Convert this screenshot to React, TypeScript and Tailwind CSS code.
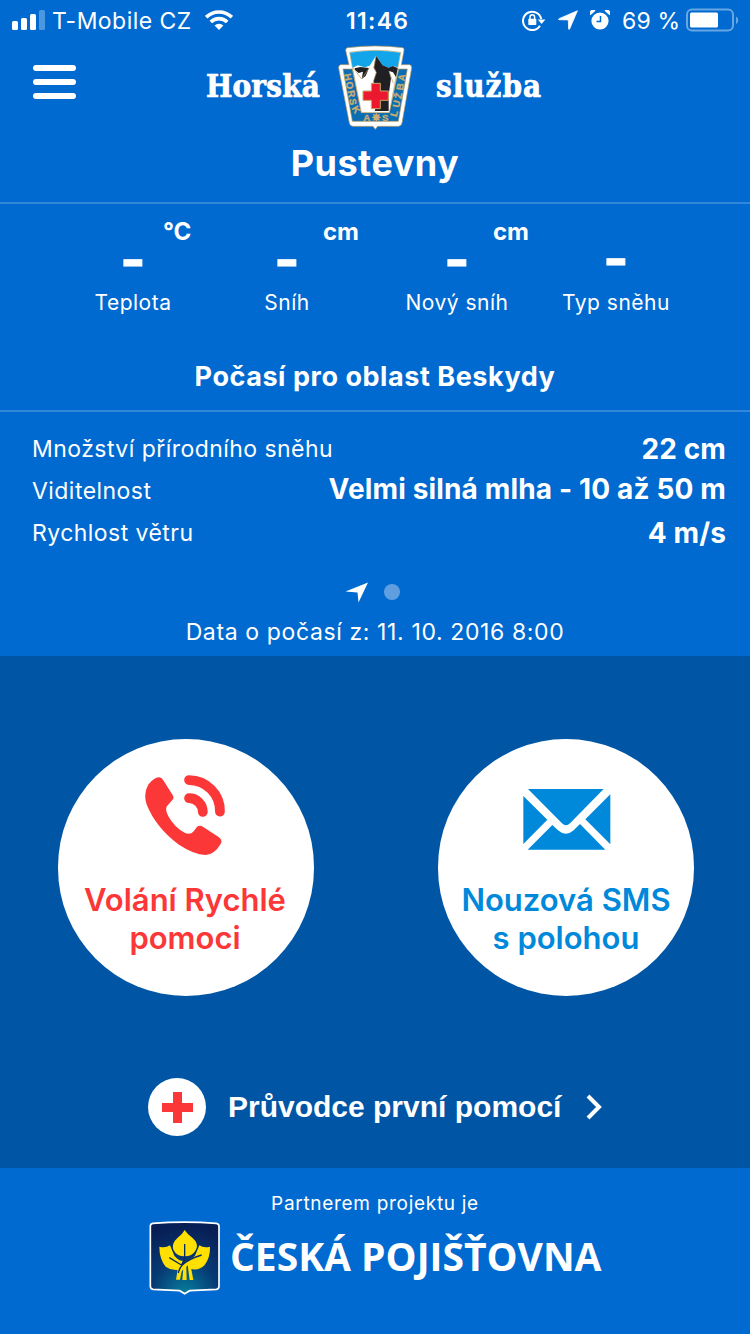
import React from 'react';

const weather = [
  { label: 'Teplota', unit: '°C', box: 'w-[154px]', unitPos: 'left-[107px]', offset: 'mt-[29px] mb-0' },
  { label: 'Sníh', unit: 'cm', box: 'w-[154px]', unitPos: 'left-[113px]', offset: 'mt-[29px] mb-0' },
  { label: 'Nový sníh', unit: 'cm', box: 'w-[186px]', unitPos: 'left-[129px]', offset: 'mt-[29px] mb-0' },
  { label: 'Typ sněhu', unit: '', box: 'w-[132px]', unitPos: 'left-[100px]', offset: 'mt-[28px] mb-px' },
];

const details = [
  { label: 'Množství přírodního sněhu', value: '22 cm', valueCls: 'tracking-[0.1px]' },
  { label: 'Viditelnost', value: 'Velmi silná mlha - 10 až 50 m', valueCls: 'tracking-[0.15px] -mt-1' },
  { label: 'Rychlost větru', value: '4 m/s', valueCls: 'tracking-[0.1px]' },
];

function StatusBar() {
  return (
    <div className="flex h-10 items-center text-[23px] leading-10">
      <svg className="ml-3 h-[20px] w-[33px] shrink-0" viewBox="0 0 33 20" fill="white">
        <rect x="0" y="11" width="6" height="9" rx="1.5" />
        <rect x="9" y="8" width="6" height="12" rx="1.5" />
        <rect x="18" y="4" width="6" height="16" rx="1.5" />
        <rect x="27" y="0" width="6" height="20" rx="1.5" opacity=".3" />
      </svg>
      <span className="mt-[2px] ml-[7px] w-[147px] whitespace-nowrap tracking-[0.45px]">T-Mobile CZ</span>
      <svg className="ml-[6px] h-[20px] w-[28px] shrink-0" viewBox="0 0 28 20" fill="none" stroke="white" strokeWidth="3.6">
        <path d="M1.2 7.2a18.2 18.2 0 0 1 25.6 0" />
        <path d="M5.8 12a11.7 11.7 0 0 1 16.4 0" />
        <path d="M14 20l-4.4-4.5a6.3 6.3 0 0 1 8.8 0z" fill="white" stroke="none" />
      </svg>
      <span className="mt-[2px] ml-[113px] w-[65px] whitespace-nowrap font-semibold tracking-[1.3px]">11:46</span>
      <svg className="ml-[111px] h-[22px] w-[24px] shrink-0" viewBox="0 0 24 22" fill="none" stroke="white" strokeWidth="2">
        <path d="M18 16.8A9.2 9.2 0 1 1 19.2 10" />
        <path d="M15.8 10.5h7.6L19.6 15z" fill="white" stroke="none" />
        <rect x="6.3" y="9.8" width="8" height="6.2" rx=".8" fill="white" stroke="none" />
        <path d="M8 10V8a2.3 2.3 0 0 1 4.600 0v2" strokeWidth="1.5" />
      </svg>
      <svg className="ml-[12px] h-[20px] w-[20px] shrink-0" viewBox="0 0 20 20" fill="white" stroke="white" strokeWidth=".8">
        <path d="M19.4.8L11.6 19c-.3.6-1 .5-1-.2L10.300 9.900 1.200 9.700c-.7 0-.8-.7-.2-1z" />
      </svg>
      <svg className="ml-[12px] h-[20px] w-[20px] shrink-0" viewBox="0 0 20 20" fill="white">
        <circle cx="10" cy="11" r="8.600" />
        <path d="M.5 5.200A3 3 0 0 1 5.500.8zM19.500 5.200A3 3 0 0 0 14.500.8z" />
        <path d="M10.500 6v5.500H6.500" fill="none" stroke="#006ad0" strokeWidth="1.500" />
      </svg>
      <span className="mt-[2px] ml-[12px] w-[58px] whitespace-nowrap tracking-[0.2px]">69 %</span>
      <svg className="ml-[6px] h-[24px] w-[54px] shrink-0" viewBox="0 0 54 24" fill="none">
        <rect x="1" y="1.500" width="46" height="21" rx="5" stroke="#66a6e3" strokeWidth="2" />
        <rect x="4" y="4.500" width="28" height="15" rx="1.500" fill="white" />
        <path d="M50 8.500c3 1.300 3 6 0 7.500z" fill="#66a6e3" />
      </svg>
    </div>
  );
}

function Badge() {
  return (
    <svg className="h-[85px] w-[76px]" viewBox="50 30 228 255">
      <path
        d="M82 38Q165 28 247 38Q252 39 251 46L243 89H268Q275 91 274 99L245 264Q242 274 234 274H172L165 283L158 274H98Q90 274 87 264L55 99Q54 91 61 89H86L76 46Q76 39 82 38Z"
        fill="white"
        stroke="#b99a5b"
        strokeWidth="2"
      />
      <path d="M68 102H96L123 232H207L235 102H261L234 259H96Z" fill="#0b6db4" stroke="#b99a5b" strokeWidth="2" />
      <path d="M88 52Q165 40 241 52L232 101L207 233H123L97 101Z" fill="white" stroke="#b99a5b" strokeWidth="2" />
      <path d="M89 53Q165 41 240 53L232 97L217 93L205 98L187 91L167 62L148 92L133 97L112 91L97 98Z" fill="#12a5ea" />
      <path d="M167 62L187 91L205 98L217 93L232 99L227 126L218 112L206 108L212 130L205 180V228H163L170 206L160 180V136L168 112L160 98Z" fill="#202024" />
      <path d="M103 100L120 96L146 99L136 123L124 132L128 110L115 114L104 105Z" fill="#202024" />
      <path d="M167 62L161 98L168 113L159 140M99 99L124 132L147 98M206 108L219 145" fill="none" stroke="#b99a5b" strokeWidth="2" />
      <path d="M153 145H180V168H204V196H180V221H153V196H128V168H153Z" fill="#ec1830" stroke="#c8a768" strokeWidth="3" />
      <g fill="#c9ad72" stroke="#c9ad72" strokeWidth="1" fontFamily="Liberation Sans" fontWeight="700" fontSize="29" textAnchor="middle">
        <text transform="translate(73 128) rotate(80)">H</text>
        <text transform="translate(78 153) rotate(80)">O</text>
        <text transform="translate(83 178) rotate(80)">R</text>
        <text transform="translate(88 202) rotate(80)">S</text>
        <text transform="translate(99 229) rotate(60)">K</text>
        <text x="139" y="258">A</text>
        <text x="166" y="258">✵</text>
        <text x="195" y="258">S</text>
        <text transform="translate(231 238) rotate(-75)">L</text>
        <text transform="translate(238 209) rotate(-78)">U</text>
        <text transform="translate(244 184) rotate(-80)">Ž</text>
        <text transform="translate(249 157) rotate(-80)">B</text>
        <text transform="translate(254 129) rotate(-80)">A</text>
      </g>
    </svg>
  );
}

function Header() {
  return (
    <header className="flex h-[164px] flex-col border-b-2 border-[#3388d9]">
      <div className="flex h-[94px] items-start font-['DejaVu_Serif_Condensed','DejaVu_Serif',serif] leading-[42px] font-bold">
        <button aria-label="Menu" className="mt-[25px] ml-[33px] flex w-[43px] flex-col gap-[8px]">
          <span className="h-[6px] rounded-full bg-white" />
          <span className="h-[6px] rounded-full bg-white" />
          <span className="h-[6px] rounded-full bg-white" />
        </button>
        <span className="mt-[25px] ml-[130px] w-[131px] text-[31px] tracking-[0.2px] whitespace-nowrap [-webkit-text-stroke:0.7px_white]">Horská</span>
        <div className="mt-[5px] w-[76px]">
          <Badge />
        </div>
        <span className="mt-[25px] ml-[23px] text-[31px] tracking-[1px] whitespace-nowrap [-webkit-text-stroke:0.7px_white]">služba</span>
      </div>
      <h1 className="mt-[6px] text-center text-[36px] leading-[46px] font-bold tracking-[0.5px]">Pustevny</h1>
    </header>
  );
}

function Weather() {
  return (
    <section className="h-[452px]">
      <div className="flex h-[144px] pl-[56px]">
        {weather.map((w) => (
          <div key={w.label} className={`relative text-center ${w.box}`}>
            <span className={`absolute top-[13px] text-[24px] leading-[30px] font-bold ${w.unitPos}`}>{w.unit}</span>
            <div className={`h-[56px] text-[54px] leading-[54px] font-bold [-webkit-text-stroke:1px_white] ${w.offset}`}>-</div>
            <div className="text-[21px] leading-[28px] tracking-[0.5px] whitespace-nowrap">{w.label}</div>
          </div>
        ))}
      </div>
      <h2 className="h-[64px] border-b-2 border-[#3388d9] pt-[9px] text-center text-[27px] leading-[40px] font-bold tracking-[0.55px]">Počasí pro oblast Beskydy</h2>
      <div className="mt-[16px] pr-[24px] pl-[32px]">
        {details.map((d) => (
          <div key={d.label} className="flex h-[42px] items-center justify-between whitespace-nowrap">
            <span className="text-[23px] tracking-[0.45px]">{d.label}</span>
            <span className={`text-[28px] font-bold ${d.valueCls}`}>{d.value}</span>
          </div>
        ))}
      </div>
      <div className="mt-[26px] flex h-[24px] items-center justify-center gap-[15px] pr-[6px]">
        <svg className="h-[21px] w-[24px]" viewBox="0 0 24 21" fill="white">
          <path d="M23 .5L13.500 20.500 12.500 10.500.500 9.500z" />
        </svg>
        <span className="size-4 rounded-full bg-[#5f9fe0]" />
      </div>
      <p className="mt-[12px] text-center text-[23px] leading-[32px] tracking-[0.62px]">Data o počasí z: 11. 10. 2016 8:00</p>
    </section>
  );
}

function Actions() {
  return (
    <section className="h-[512px] bg-[#0055a5] pt-[83px]">
      <div className="flex gap-[124px] pl-[58px]">
        <button className="flex h-[257px] w-[256px] flex-col items-center rounded-full bg-white text-[#fb3737]">
          <svg className="mt-[36px] mr-[3px] h-[80px] w-[82px]" viewBox="44 47 240 238" fill="#fb3737">
            <path d="M55 75Q72 55 86 54Q94 53 99 62L128 108Q132 116 127 121L110 140Q104 151 114 169Q132 202 163 219Q180 226 190 214L200 201Q207 195 216 200L265 232Q277 241 270 252Q252 283 225 285Q190 284 145 254Q77 203 50 135Q39 102 55 75Z" />
            <path d="M176 62A92 92 0 0 1 268 156M176 116A41 41 0 0 1 217 157" fill="none" stroke="#fb3737" strokeWidth="29" strokeLinecap="round" />
          </svg>
          <span className="mt-[26px] mr-[2px] text-[31px] leading-[38px] font-semibold whitespace-nowrap">
            Volání Rychlé
            <br />
            pomoci
          </span>
        </button>
        <button className="flex h-[257px] w-[256px] flex-col items-center rounded-full bg-white text-[#0088da]">
          <svg className="mt-[50px] ml-[2px] h-[61px] w-[88px]" viewBox="39 42 262 183" fill="#0088da">
            <path d="M53 42H280L179 145Q167 157 155 145ZM39 63L111 134L39 207ZM300 58V208L225 133ZM52 224L126 150L143 166Q167 187 190 166L209 147L285 224Z" />
          </svg>
          <span className="mt-[31px] text-[31px] leading-[38px] font-semibold whitespace-nowrap">
            Nouzová SMS
            <br />s polohou
          </span>
        </button>
      </div>
      <button className="mt-[82px] ml-[148px] flex h-[58px] items-center">
        <svg className="size-[58px]" viewBox="0 0 58 58">
          <circle cx="29" cy="29" r="29" fill="white" />
          <path d="M25 14h9v11h11v9H34v11h-9V34H14v-9h11z" fill="#fb3737" />
        </svg>
        <span className="ml-[22px] w-[334px] text-left font-['Liberation_Sans',sans-serif] text-[30px] leading-[40px] font-bold whitespace-nowrap">Průvodce první pomocí</span>
        <svg className="ml-[24px] h-[26px] w-[17px]" viewBox="0 0 17 26" fill="none" stroke="white" strokeWidth="4">
          <path d="M2 2L13 13 2 24" />
        </svg>
      </button>
    </section>
  );
}

function Partner() {
  return (
    <footer className="h-[166px]">
      <p className="pt-[22px] text-center text-[19px] leading-[28px] tracking-[0.7px]">Partnerem projektu je</p>
      <div className="mt-[3px] ml-[149px] flex">
        <svg className="h-[74px] w-[71px]" viewBox="27 32 213 222">
          <defs>
            <radialGradient id="shield" cx=".5" cy="1" r=".95">
              <stop offset="0" stopColor="#067f9d" />
              <stop offset=".5" stopColor="#063a74" />
              <stop offset="1" stopColor="#081f55" />
            </radialGradient>
          </defs>
          <path d="M38 39Q134 32 229 39Q237 40 237 48V228Q237 236 229 237L149 241L134 250L119 241L39 237Q31 236 31 228V48Q31 40 38 39Z" fill="url(#shield)" stroke="white" strokeWidth="5" />
          <g fill="#ffe000">
            <path d="M58 109Q76 114 90 105L103 136Q118 153 128 151L119 178Q97 183 77 169Q58 145 58 109ZM210 109Q192 114 178 105L165 136Q148 153 138 153L150 175Q176 183 194 164Q211 141 210 109Z" />
            <path d="M134 59Q143 73 157 82Q177 99 168 118Q157 138 134 138Q110 138 100 118Q94 99 113 82Q126 74 134 59Z" />
            <path d="M113 178L108 208H120L126 178ZM130 171L127 209H140L139 168ZM143 165L149 209H160L151 161Z" />
            <path d="M118 151L128 163L151 145L190 132L150 159L117 190Z" />
          </g>
          <path d="M134 101V142Q134 154 124 164L88 142M185 134Q145 146 127 164Q118 173 115 188" fill="none" stroke="#082b60" strokeWidth="4" />
        </svg>
        <span className="ml-[10px] font-['Open_Sans',sans-serif] text-[39px] leading-[69px] font-bold whitespace-nowrap">ČESKÁ POJIŠŤOVNA</span>
      </div>
    </footer>
  );
}

export default function App() {
  return (
    <div className="h-[1334px] w-[750px] overflow-hidden bg-[#006ad0] font-['Inter',sans-serif] text-white">
      <StatusBar />
      <Header />
      <Weather />
      <Actions />
      <Partner />
    </div>
  );
}
